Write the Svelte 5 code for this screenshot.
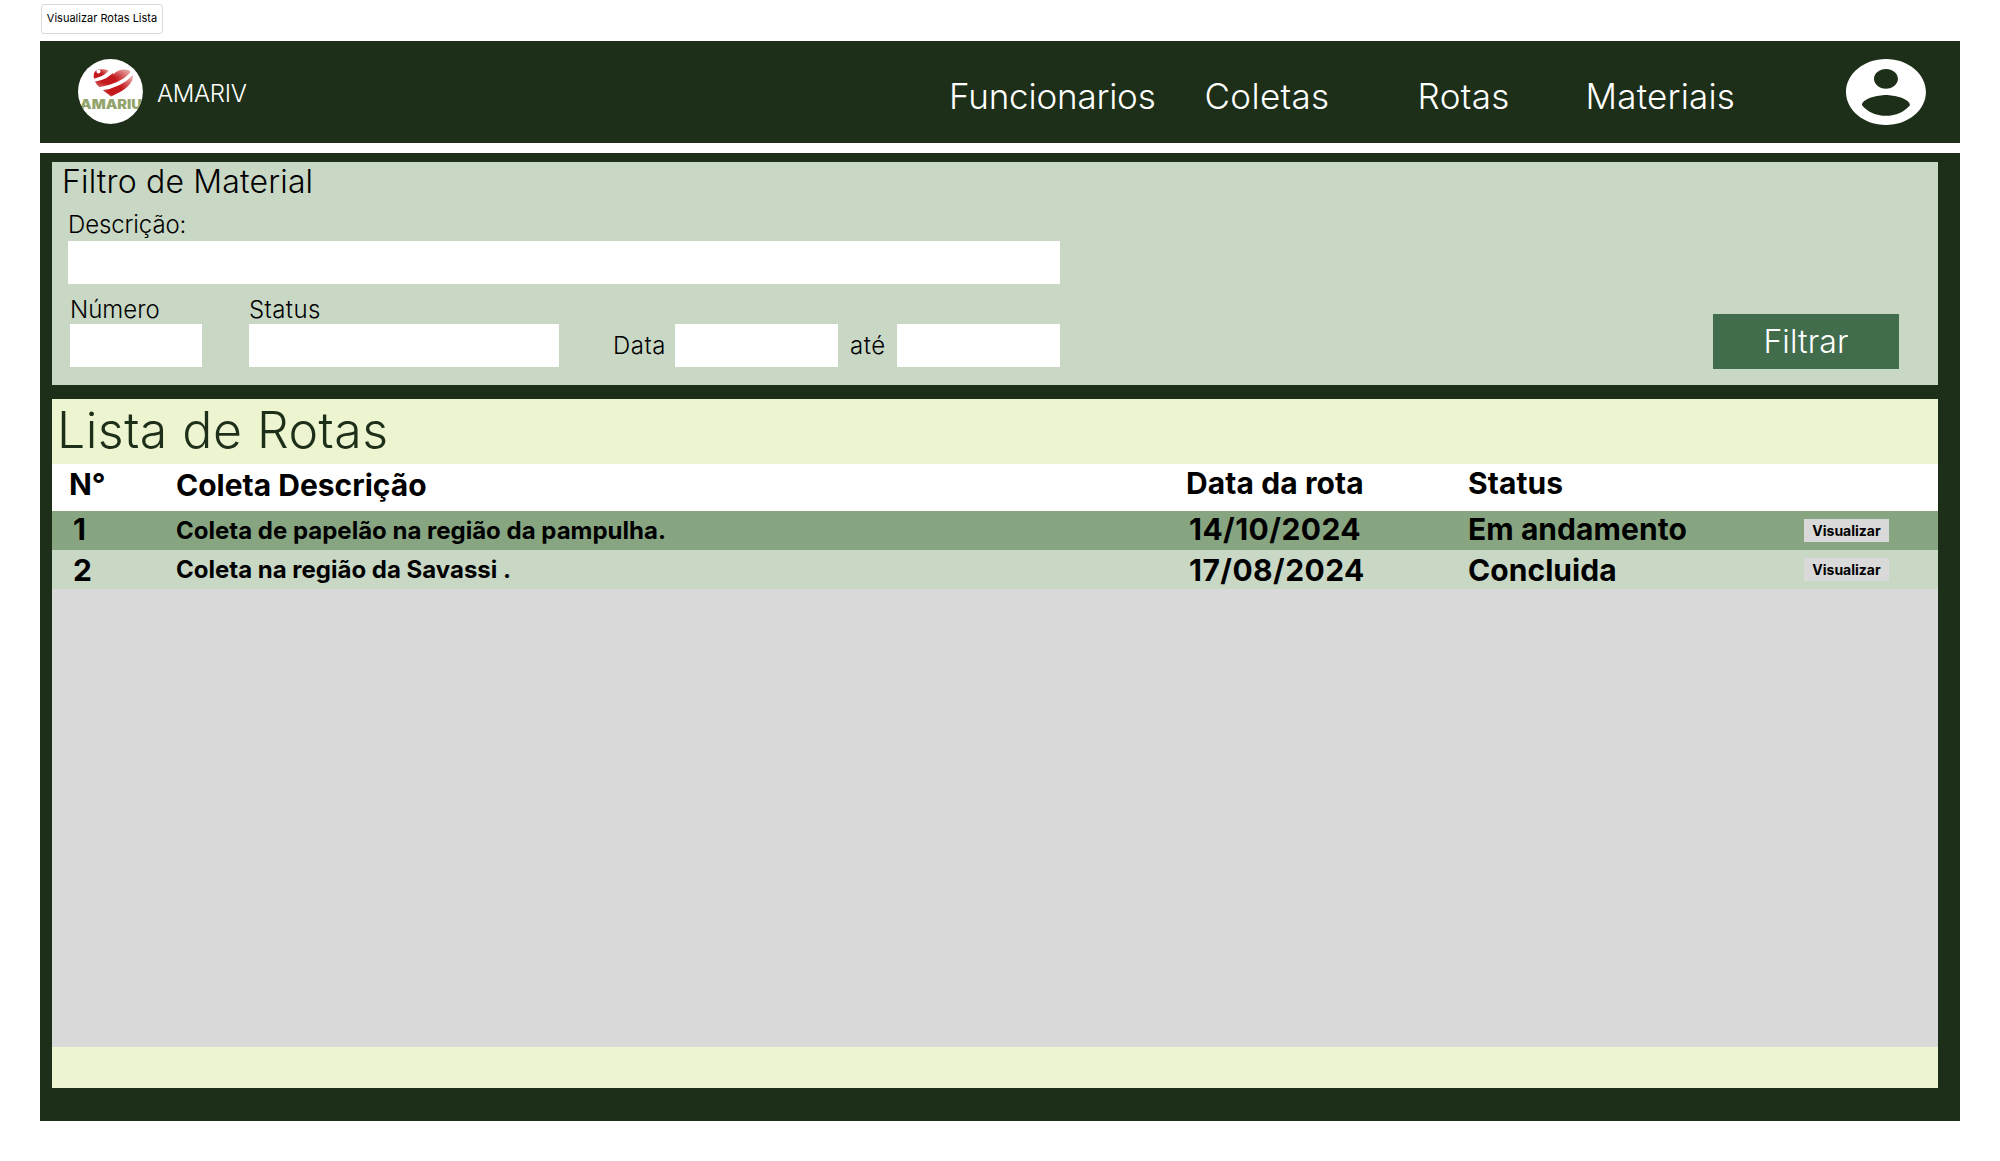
<script>
  const links = ['Funcionarios', 'Coletas', 'Rotas', 'Materiais'];
  const routes = [
    { id: 1, description: 'Coleta de papelão na região da pampulha.', date: '14/10/2024', status: 'Em andamento' },
    { id: 2, description: 'Coleta na região da Savassi .', date: '17/08/2024', status: 'Concluida' },
  ];
</script>

<div class="page">
  <div class="tab">Visualizar Rotas Lista</div>

  <header>
    <svg class="logo" viewBox="0 0 65 65" aria-hidden="true">
      <defs>
        <clipPath id="disc"><circle cx="32.5" cy="32.5" r="32.5" /></clipPath>
        <clipPath id="heart">
          <path d="M33 37.500C28 33 18 28 16 20C15 14 17 11 21 10.500Q30 9 35.500 15Q42 9 50 11Q57 14 54 22C50 30 40 34 33 37.500Z" />
        </clipPath>
        <radialGradient id="redLeft" cx="0.3" cy="0.65" r="0.75">
          <stop offset="0.35" stop-color="#c4191c" /><stop offset="1" stop-color="#e9a6a4" />
        </radialGradient>
        <radialGradient id="redRight" cx="0.4" cy="0.6" r="0.65">
          <stop offset="0.3" stop-color="#c4191c" /><stop offset="1" stop-color="#e39c9a" />
        </radialGradient>
      </defs>
      <g clip-path="url(#disc)">
        <rect width="65" height="65" fill="#fff" />
        <g clip-path="url(#heart)">
          <path d="M14 8H32Q31 16 15 20Z" fill="url(#redLeft)" />
          <path d="M15 23Q32 21 38 9H53L52 14Q42 25 20 28.500Z" fill="url(#redRight)" />
          <path d="M23 31.500Q43 29 55 16L58 23L33 40Z" fill="url(#redRight)" />
          <circle cx="20.500" cy="12.500" r="2" fill="#fff" />
        </g>
        <text x="2" y="50" textLength="62" lengthAdjust="spacingAndGlyphs">AMARIU</text>
      </g>
    </svg>
    <span class="brand">AMARIV</span>
    <nav>
      {#each links as link}<a href="#top">{link}</a>{/each}
    </nav>
    <svg class="avatar" viewBox="2 2 20 20" preserveAspectRatio="none" aria-hidden="true">
      <path fill="#fff" d="M12 2C6.480 2 2 6.480 2 12s4.480 10 10 10 10-4.480 10-10S17.520 2 12 2zm0 3c1.660 0 3 1.340 3 3s-1.340 3-3 3-3-1.340-3-3 1.340-3 3-3zm0 14.200c-2.500 0-4.710-1.280-6-3.220.030-1.990 4-3.080 6-3.080 1.990 0 5.970 1.090 6 3.080-1.290 1.940-3.500 3.220-6 3.220z" />
    </svg>
  </header>

  <main>
    <section class="filter">
      <h2>Filtro de Material</h2>
      <label class="description"><span>Descrição:</span><input /></label>
      <div class="fields">
        <label class="number"><span>Número</span><input /></label>
        <label class="state"><span>Status</span><input /></label>
        <label class="from"><span>Data</span><input /></label>
        <label class="until"><span>até</span><input /></label>
        <button class="apply">Filtrar</button>
      </div>
    </section>

    <section class="list">
      <h1>Lista de Rotas</h1>
      <div class="row head">
        <span class="num">N°</span>
        <span class="desc">Coleta Descrição</span>
        <span class="date">Data da rota</span>
        <span class="title">Status</span>
      </div>
      {#each routes as route}
        <div class="row item">
          <span class="num">{route.id}</span>
          <span class="desc">{route.description}</span>
          <span class="date">{route.date}</span>
          <span class="status">{route.status}</span>
          <button class="view">Visualizar</button>
        </div>
      {/each}
      <div class="empty"></div>
      <div class="foot"></div>
    </section>
  </main>
</div>

<style>
  :global(body) { background: #fff; }
  .page {
    box-sizing: border-box;
    width: 2000px;
    height: 1161px;
    padding: 4px 40px 0;
    font-family: Inter, "Liberation Sans", sans-serif;
    font-weight: 300;
    color: #000;
  }
  input, button {
    box-sizing: border-box;
    border: 0;
    border-radius: 0;
    margin: 0;
    padding: 0;
    font-family: inherit;
  }
  .tab {
    box-sizing: border-box;
    width: 122px;
    height: 30px;
    margin: 0 0 7px 1px;
    border: 1px solid #d9d9d9;
    border-radius: 3px;
    font-size: 11px;
    font-weight: 400;
    line-height: 27px;
    text-align: center;
    white-space: nowrap;
  }
  header {
    box-sizing: border-box;
    display: flex;
    height: 102px;
    padding: 18px 34px 0 38px;
    background: #1d2f18;
    color: #fff;
  }
  .logo { width: 65px; height: 65px; }
  .logo text {
    font-family: Inter, sans-serif;
    font-size: 12.500px;
    font-weight: 900;
    fill: #93a56d;
  }
  .brand {
    width: 793px;
    padding-left: 14px;
    font-size: 24px;
    letter-spacing: -0.350px;
    line-height: 70px;
  }
  nav {
    display: grid;
    grid-template-columns: 255.500px 213px 168px 260.500px;
    font-size: 35px;
    line-height: 74px;
  }
  nav a { color: inherit; text-decoration: none; letter-spacing: 0.300px; }
  nav a:first-child { letter-spacing: -0.200px; }
  nav a:last-child { letter-spacing: 0.200px; }
  .avatar { width: 80px; height: 66px; }
  main {
    box-sizing: border-box;
    height: 968px;
    margin-top: 10px;
    padding: 9px 22px 0 12px;
    background: #1d2f18;
  }
  .filter {
    box-sizing: border-box;
    height: 223px;
    padding-left: 16px;
    background: #c8d8c5;
  }
  h1, h2 { margin: 0; font-weight: 300; }
  h2 {
    margin-left: -6px;
    font-size: 32px;
    letter-spacing: 0.170px;
    line-height: 40px;
  }
  label { display: block; font-size: 24px; }
  label span { display: block; white-space: nowrap; }
  input { display: block; height: 43px; background: #fff; }
  .description span { height: 39px; letter-spacing: -0.100px; line-height: 45px; }
  .description input { width: 992px; }
  .fields { display: flex; height: 83px; padding-left: 2px; }
  .number, .state { padding-top: 10px; }
  .number span, .state span { height: 30px; line-height: 31px; }
  .number { width: 179px; }
  .number input { width: 132px; }
  .state span { letter-spacing: 0.400px; }
  .state input { width: 310px; }
  .from, .until {
    display: flex;
    align-self: flex-end;
    letter-spacing: 0.500px;
    line-height: 43px;
  }
  .from { margin-left: 54px; }
  .from span { width: 62px; }
  .until { margin-left: 12px; }
  .until span { width: 47px; }
  .from input, .until input { width: 163px; }
  .apply {
    align-self: flex-end;
    width: 186px;
    height: 55px;
    margin: 0 0 -2px 653px;
    background: #416d4c;
    color: #fff;
    font-size: 32px;
    font-weight: 300;
    letter-spacing: 0.100px;
    line-height: 55px;
  }
  .list { height: 689px; margin-top: 14px; background: #ecf4d0; }
  h1 {
    height: 65px;
    padding-left: 5px;
    color: #1d2f18;
    font-size: 50px;
    letter-spacing: 0.480px;
    line-height: 62px;
  }
  .row {
    display: grid;
    grid-template-columns: 107px 1010px 282px 336px 85px;
    padding-left: 17px;
    align-items: center;
    height: 39px;
    font-size: 30px;
    font-weight: 700;
    line-height: 39px;
    white-space: nowrap;
  }
  .head { height: 47px; background: #fff; line-height: 39px; align-items: start; }
  .head .num { line-height: 41px; }
  .head .desc { line-height: 43px; }
  .head :is(.date, .title) { letter-spacing: 0.100px; }
  .item { background: #c8d8c5; }
  .item .num { padding-left: 4px; }
  .item .desc { font-size: 24px; }
  .item .date { padding-left: 3px; letter-spacing: 0.450px; }
  .item .status { letter-spacing: 0.060px; }
  .item :is(.num, .date, .status) { line-height: 37px; padding-top: 2px; }
  .item:nth-of-type(2) { background: #86a580; }
  .item:nth-of-type(2) :is(.num, .date, .status) { line-height: 36px; padding-top: 0; padding-bottom: 3px; }
  .view {
    height: 23px;
    background: #d9d9d9;
    color: #000;
    font-size: 14px;
    font-weight: 700;
    line-height: 23px;
  }
  .empty { height: 458px; background: #d9d9d9; }
  .foot { height: 41px; }
</style>
